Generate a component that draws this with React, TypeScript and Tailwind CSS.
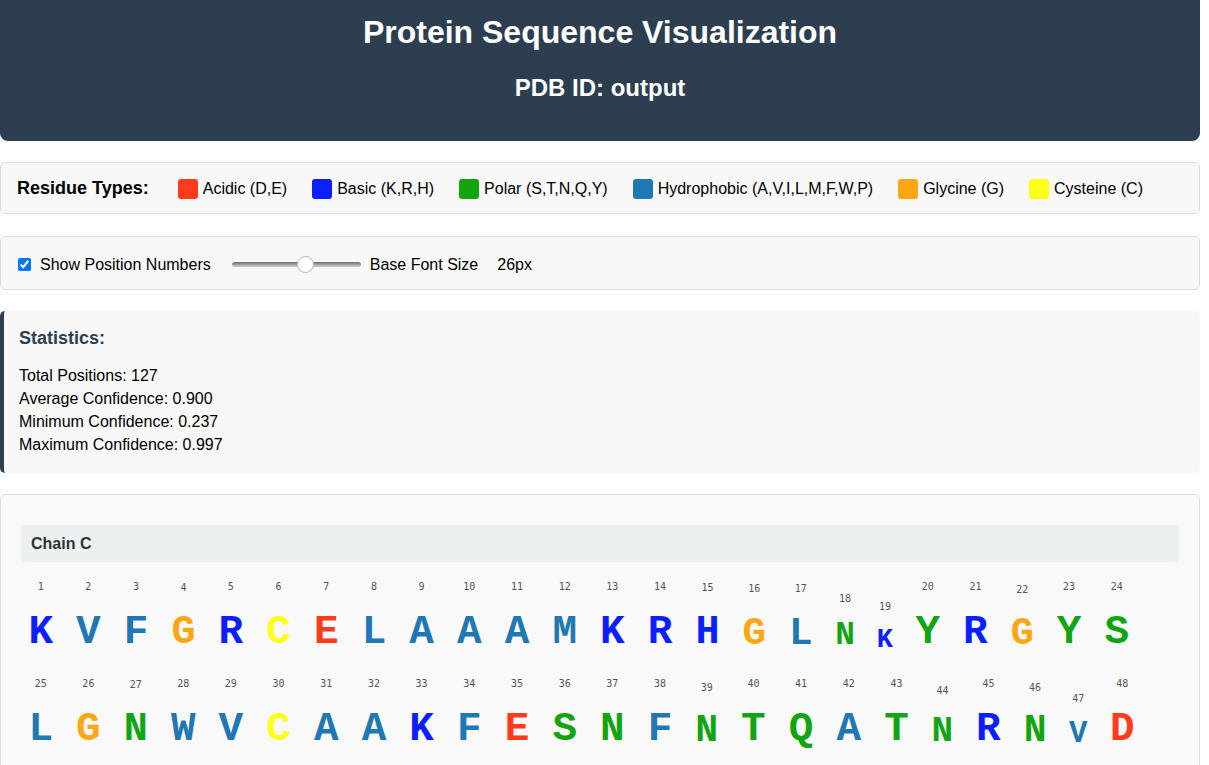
import { useState } from "react";

const SEQUENCE =
  "KVFGRCELAAAMKRHGLNKYRGYSLGNWVCAAKFESNFNTQATNRNVD" +
  "GSTDYGILQINSRWWCNDGRTPGSRNLCNIPCSALLSSDITASVNCAKKIVSDGNGMNAWVAWRNRCKGTDVQAWIRGC";

// relative letter size per position (from confidence), 1 when not listed
const SCALES: { [pos: number]: number } = {
  4: 0.98, 15: 0.98, 16: 0.96, 17: 0.96, 18: 0.8, 19: 0.66, 22: 0.94,
  27: 0.98, 39: 0.93, 44: 0.88, 46: 0.93, 47: 0.75,
};

const LEGEND = [
  { label: "Acidic (D,E)", swatch: "bg-[#ff3b1c]" },
  { label: "Basic (K,R,H)", swatch: "bg-[#0b1fff]" },
  { label: "Polar (S,T,N,Q,Y)", swatch: "bg-[#12a512]" },
  { label: "Hydrophobic (A,V,I,L,M,F,W,P)", swatch: "bg-[#1f77b4]" },
  { label: "Glycine (G)", swatch: "bg-[#ffa615]" },
  { label: "Cysteine (C)", swatch: "bg-[#ffff17]" },
];

const colorFor = (aa: string) => {
  if ("DE".includes(aa)) return "text-[#ff3b1c]";
  if ("KRH".includes(aa)) return "text-[#0b1fff]";
  if ("STNQY".includes(aa)) return "text-[#12a512]";
  if (aa === "G") return "text-[#ffa615]";
  if (aa === "C") return "text-[#ffff17]";
  return "text-[#1f77b4]";
};

export default function App() {
  const [showNumbers, setShowNumbers] = useState(true);
  const [baseSize, setBaseSize] = useState(26);

  const residues = SEQUENCE.split("").map((aa, i) => ({ aa, pos: i + 1, s: SCALES[i + 1] ?? 1 }));

  return (
    <div className="w-[1200px] font-['Liberation_Sans',Arial,sans-serif] text-black">
      {/* HEADER */}
      <header className="h-[141px] bg-[#2c3e50] rounded-b-lg text-white text-center pt-[14px]">
        <h1 className="text-[32px] leading-[37px] font-bold">Protein Sequence Visualization</h1>
        <h2 className="mt-[23px] text-[24px] leading-[28px] font-bold">PDB ID: output</h2>
      </header>

      {/* LEGEND */}
      <div className="mt-[21px] h-[52px] border border-[#ddd] bg-[#f8f8f8] rounded-[5px] flex items-center pl-[16px] pt-[1px]">
        <span className="text-[18px] font-bold mr-[29px]">Residue Types:</span>
        <div className="flex items-center gap-[25px]">
          {LEGEND.map((item) => (
            <div key={item.label} className="flex items-center gap-[5px]">
              <span className={`w-[20px] h-[20px] rounded-[3px] ${item.swatch}`} />
              <span className="text-[16px]">{item.label}</span>
            </div>
          ))}
        </div>
      </div>

      {/* CONTROLS */}
      <div className="mt-[22px] h-[54px] border border-[#ddd] bg-[#f8f8f8] rounded-[5px] flex items-center pl-[17px] pt-[3px] text-[16px]">
        <label className="flex items-center">
          <input
            type="checkbox"
            checked={showNumbers}
            onChange={(e) => setShowNumbers(e.target.checked)}
            className="w-[13px] h-[13px]"
          />
          <span className="ml-[9px]">Show Position Numbers</span>
        </label>
        <input
          type="range"
          min={12}
          max={36}
          value={baseSize}
          onChange={(e) => setBaseSize(Number(e.target.value))}
          className="ml-[21px] appearance-none w-[129px] h-[5px] rounded-full bg-linear-to-b from-[#6f6f6f] to-[#d2d2d2] [&::-webkit-slider-thumb]:appearance-none [&::-webkit-slider-thumb]:w-[17px] [&::-webkit-slider-thumb]:h-[17px] [&::-webkit-slider-thumb]:rounded-full [&::-webkit-slider-thumb]:bg-white [&::-webkit-slider-thumb]:border [&::-webkit-slider-thumb]:border-[#b5b5b5]"
        />
        <span className="ml-[9px]">Base Font Size</span>
        <span className="ml-[19px]">{baseSize}px</span>
      </div>

      {/* STATS */}
      <div className="mt-[21px] h-[162px] bg-[#f8f8f8] border-l-4 border-[#2c3e50] rounded-[5px] pl-[15px] pt-[17px]">
        <h3 className="text-[18px] leading-[21px] font-bold text-[#2c3e50]">Statistics:</h3>
        <div className="mt-[15px] text-[16px] leading-[23px]">
          <p>Total Positions: 127</p>
          <p>Average Confidence: 0.900</p>
          <p>Minimum Confidence: 0.237</p>
          <p>Maximum Confidence: 0.997</p>
        </div>
      </div>

      {/* SEQUENCE */}
      <div className="mt-[21px] border border-[#ddd] bg-[#f9f9f9] rounded-[5px] px-[20px] pt-[30px] pb-[20px]">
        <div className="h-[37px] bg-[#ecf0f1] rounded-[4px] pl-[10px] flex items-center text-[16px] font-bold text-[#333]">
          Chain C
        </div>
        <div className="mt-[19px] flex flex-wrap items-end gap-x-[8.3px] gap-y-[25px]">
          {residues.map((r) => (
            <div key={r.pos} className="flex flex-col items-center" style={{ width: 28.8 * r.s + 10.6 }}>
              {showNumbers && (
                <span className="h-[12px] mb-[2px] text-[10px] leading-[12px] text-[#555] font-['DejaVu_Sans_Mono',monospace]">
                  {r.pos}
                </span>
              )}
              <span
                className={`font-bold leading-none pt-[0.417em] font-['Liberation_Mono',monospace] ${colorFor(r.aa)}`}
                style={{ fontSize: (baseSize * 41 / 26) * r.s }}
              >
                {r.aa}
              </span>
            </div>
          ))}
        </div>
      </div>
    </div>
  );
}
